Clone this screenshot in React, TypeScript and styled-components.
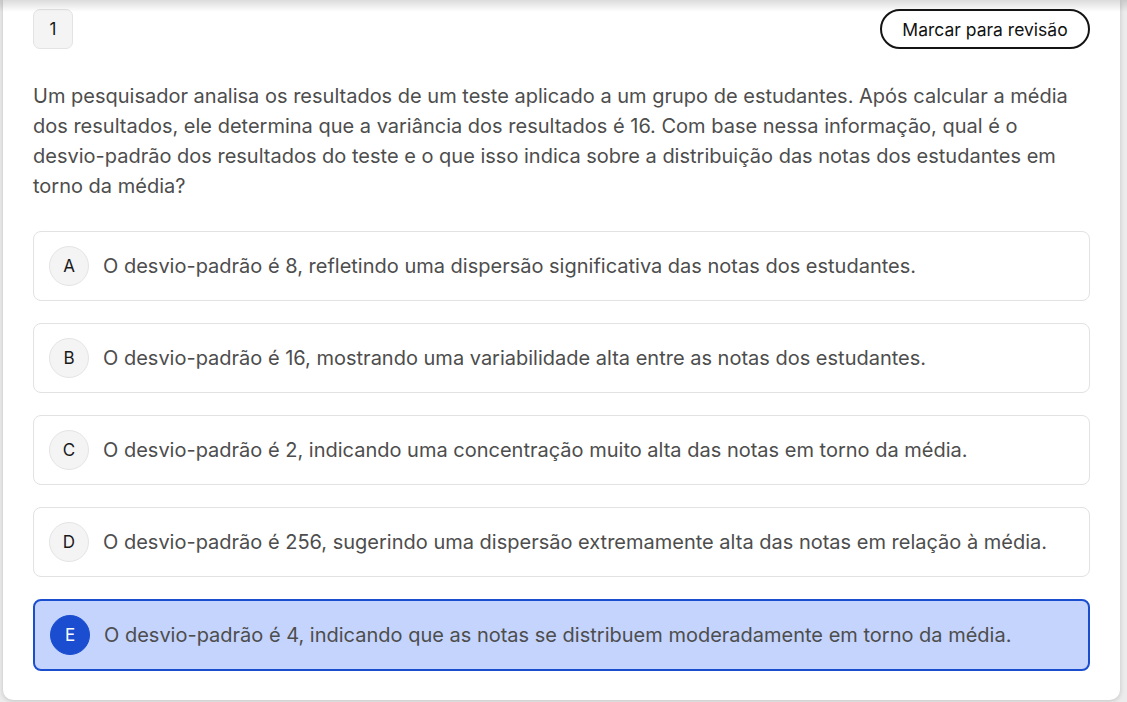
import React from "react";
import styled, { createGlobalStyle, css } from "styled-components";

const GlobalStyle = createGlobalStyle`
  html, body { margin: 0; padding: 0; }
  body {
    background: #ececec;
    font-family: Inter, "Noto Sans", "Liberation Sans", sans-serif;
    -webkit-font-smoothing: antialiased;
  }
  * { box-sizing: border-box; }
`;

const Page = styled.div`
  position: relative;
  height: 702px;
  padding: 0 7px 2px 3px;
  overflow: hidden;
  &::after {
    content: "";
    position: absolute;
    left: 0;
    right: 0;
    top: 0;
    height: 12px;
    background: linear-gradient(to bottom, rgba(0, 0, 0, 0.14), rgba(0, 0, 0, 0));
    pointer-events: none;
  }
`;

const Card = styled.section`
  background: #ffffff;
  border-radius: 0 0 10px 10px;
  box-shadow: 0 1px 5px rgba(0, 0, 0, 0.18);
  padding: 9px 30px 29px 30px;
  height: 700px;
  display: flex;
  flex-direction: column;
`;

const TopRow = styled.div`
  display: flex;
  align-items: center;
  justify-content: space-between;
  height: 40px;
`;

const NumberBadge = styled.div`
  width: 40px;
  height: 40px;
  border-radius: 7px;
  background: #f4f4f4;
  border: 1px solid #e3e3e3;
  display: flex;
  align-items: center;
  justify-content: center;
  font-size: 17px;
  color: #1a1a1a;
`;

const ReviewButton = styled.button`
  height: 40px;
  width: 210px;
  border: 2px solid #141414;
  border-radius: 999px;
  background: #ffffff;
  font-family: inherit;
  font-size: 17.5px;
  font-weight: 400;
  color: #111111;
  cursor: pointer;
`;

const Question = styled.p`
  margin: 32px 0 30px 0;
  font-size: 20px;
  line-height: 30px;
  color: #4d4d4d;
`;

const Options = styled.div`
  display: flex;
  flex-direction: column;
  gap: 22px;
`;

const Option = styled.div<{ $selected?: boolean }>`
  display: flex;
  align-items: center;
  gap: 14px;
  padding: 14px 15px;
  border-radius: 8px;
  border: 1px solid #e2e2e2;
  background: #ffffff;
  ${(p) =>
    p.$selected &&
    css`
      border: 2px solid #1b4ecf;
      background: #c4d4fd;
    `}
`;

const Letter = styled.div<{ $selected?: boolean }>`
  flex: none;
  width: 40px;
  height: 40px;
  border-radius: 50%;
  display: flex;
  align-items: center;
  justify-content: center;
  font-size: 17px;
  background: ${(p) => (p.$selected ? "#1a4dcf" : "#f4f4f4")};
  border: 1px solid ${(p) => (p.$selected ? "#1a4dcf" : "#e4e4e4")};
  color: ${(p) => (p.$selected ? "#ffffff" : "#1a1a1a")};
`;

const OptionText = styled.span`
  font-size: 20px;
  line-height: 28px;
  color: #4d4d4d;
`;

const options = [
  { l: "A", t: "O desvio-padrão é 8, refletindo uma dispersão significativa das notas dos estudantes." },
  { l: "B", t: "O desvio-padrão é 16, mostrando uma variabilidade alta entre as notas dos estudantes." },
  { l: "C", t: "O desvio-padrão é 2, indicando uma concentração muito alta das notas em torno da média." },
  { l: "D", t: "O desvio-padrão é 256, sugerindo uma dispersão extremamente alta das notas em relação à média." },
  { l: "E", t: "O desvio-padrão é 4, indicando que as notas se distribuem moderadamente em torno da média.", s: true },
];

export default function App() {
  return (
    <>
      <GlobalStyle />
      <Page>
        <Card>
          <TopRow>
            <NumberBadge>1</NumberBadge>
            <ReviewButton>Marcar para revisão</ReviewButton>
          </TopRow>
          <Question>
            Um pesquisador analisa os resultados de um teste aplicado a um grupo de estudantes. Após calcular a média
            dos resultados, ele determina que a variância dos resultados é 16. Com base nessa informação, qual é o
            desvio-padrão dos resultados do teste e o que isso indica sobre a distribuição das notas dos estudantes em
            torno da média?
          </Question>
          <Options>
            {options.map((o) => (
              <Option key={o.l} $selected={o.s}>
                <Letter $selected={o.s}>{o.l}</Letter>
                <OptionText>{o.t}</OptionText>
              </Option>
            ))}
          </Options>
        </Card>
      </Page>
    </>
  );
}
